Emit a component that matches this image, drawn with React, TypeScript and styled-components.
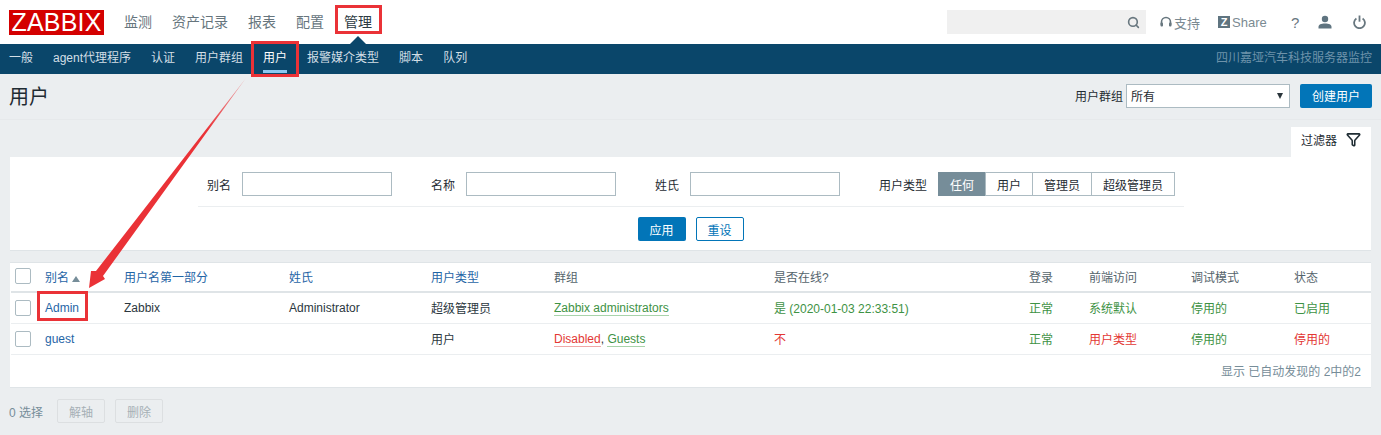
import styled, { createGlobalStyle } from "styled-components";
import { Filter, Search } from "lucide-react";

const GlobalStyle = createGlobalStyle`
  html, body {
    margin: 0;
    padding: 0;
    background: #ebeef0;
  }
  body {
    font-family: "Liberation Sans", "Noto Sans CJK SC", sans-serif;
    font-size: 12px;
    color: #1f2c33;
  }
`;

const Page = styled.div`
  position: relative;
  width: 1381px;
  height: 435px;
  overflow: hidden;
  background: #ebeef0;
`;

const TopBar = styled.header`
  display: flex;
  align-items: center;
  height: 44px;
  padding: 0 15px 0 9px;
  background: #fff;
`;

const Logo = styled.div`
  display: flex;
  align-items: center;
  justify-content: center;
  width: 95px;
  height: 25px;
  margin-right: 20px;
  background: #d40000;
  color: #fff;
  font-size: 25px;
  letter-spacing: 0.2px;
`;

const MainNav = styled.nav`
  display: flex;
  gap: 20px;
`;

const MainNavItem = styled.span<{ $active?: boolean }>`
  position: relative;
  font-size: 14px;
  line-height: 20px;
  color: ${(p) => (p.$active ? "#2c3a42" : "#66757d")};

  ${(p) =>
    p.$active &&
    `
    &::after {
      content: "";
      position: absolute;
      left: 6px;
      bottom: -12px;
      border-left: 8px solid transparent;
      border-right: 8px solid transparent;
      border-bottom: 8px solid #0a466a;
    }
  `}
`;

const ToolBar = styled.div`
  display: flex;
  align-items: center;
  margin-left: auto;
  color: #68777f;
`;

const SearchBox = styled.div`
  display: flex;
  align-items: center;
  justify-content: flex-end;
  width: 199px;
  height: 24px;
  padding-right: 6px;
  box-sizing: border-box;
  margin-right: 14px;
  background: #f0f0f0;
  color: #68777f;
`;

const ToolLink = styled.span<{ $width: number }>`
  display: flex;
  align-items: center;
  gap: 2px;
  width: ${(p) => p.$width}px;
  font-size: 13px;
  color: #7b8a92;
`;

const ZBadge = styled.span`
  display: inline-flex;
  align-items: center;
  justify-content: center;
  width: 12px;
  height: 12px;
  background: #5f7480;
  color: #fff;
  font-size: 11px;
  font-weight: 700;
`;

const HelpMark = styled.span`
  margin-left: 1px;
  font-size: 15px;
  color: #68777f;
`;

const SubBar = styled.nav`
  display: flex;
  align-items: stretch;
  gap: 20px;
  height: 30px;
  padding: 0 9px;
  background: #0a466a;
`;

const SubItem = styled.span<{ $active?: boolean }>`
  position: relative;
  line-height: 29px;
  color: ${(p) => (p.$active ? "#fff" : "#d3dfe6")};

  ${(p) =>
    p.$active &&
    `
    &::after {
      content: "";
      position: absolute;
      left: 0;
      right: 0;
      bottom: 1px;
      height: 3px;
      background: #8cc8f0;
    }
  `}
`;

const Motto = styled.span`
  margin-left: auto;
  line-height: 29px;
  color: #6e93aa;
`;

const TitleBar = styled.div`
  display: flex;
  align-items: center;
  height: 46px;
  padding: 0 9px 2px;
  box-sizing: border-box;
  border-bottom: 1px solid #e6e9eb;
`;

const Title = styled.h1`
  margin: 0 auto 0 0;
  font-size: 20px;
  font-weight: 400;
  color: #1f2c33;
`;

const GroupLabel = styled.label`
  margin-right: 3px;
  color: #1f2c33;
`;

const GroupSelect = styled.div`
  display: flex;
  align-items: center;
  justify-content: space-between;
  width: 164px;
  height: 24px;
  box-sizing: border-box;
  padding: 0 6px 0 4px;
  margin-right: 10px;
  background: #fff;
  border: 1px solid #acbbc2;
  color: #1f2c33;
`;

const SelectArrow = styled.span`
  border-left: 3px solid transparent;
  border-right: 3px solid transparent;
  border-top: 6px solid #2a353b;
`;

const PrimaryButton = styled.button<{ $width: number }>`
  width: ${(p) => p.$width}px;
  height: 24px;
  padding: 0;
  border: 0;
  border-radius: 2px;
  background: #0275b8;
  color: #fff;
  font: inherit;
`;

const OutlineButton = styled(PrimaryButton)`
  border: 1px solid #0275b8;
  background: #fff;
  color: #0275b8;
`;

const GhostButton = styled(PrimaryButton)`
  border: 1px solid #dcdfe1;
  background: #ebeef0;
  color: #a6b0b6;
`;

const FilterTabRow = styled.div`
  display: flex;
  justify-content: flex-end;
  padding: 7px 10px 0 0;
`;

const FilterTab = styled.div`
  display: flex;
  align-items: center;
  justify-content: space-between;
  width: 80px;
  height: 30px;
  box-sizing: border-box;
  padding: 0 10px 5px;
  background: #fff;
  color: #1f2c33;
`;

const FilterPanel = styled.section`
  margin: 0 10px;
  height: 94px;
  box-sizing: border-box;
  padding-top: 15px;
  background: #fff;
  border-bottom: 1px solid #dfe4e7;
`;

const FilterRow = styled.div`
  display: flex;
  align-items: center;
  height: 24px;
  margin: 0 187px 0 188px;
  padding: 0 0 10px 9px;
  border-bottom: 1px solid #ebeef0;
`;

const FilterField = styled.label`
  display: flex;
  flex: none;
  align-items: center;
  gap: 11px;
  margin-right: 39px;
  white-space: nowrap;
`;

const TextBox = styled.div`
  flex: none;
  width: 150px;
  height: 24px;
  box-sizing: border-box;
  background: #fff;
  border: 1px solid #acbbc2;
`;

const Segments = styled.div`
  display: flex;
  flex: none;
  height: 24px;
  padding-left: 1px;
`;

const Segment = styled.span<{ $width: number; $on?: boolean }>`
  display: flex;
  align-items: center;
  justify-content: center;
  width: ${(p) => p.$width}px;
  box-sizing: border-box;
  margin-left: -1px;
  border: 1px solid ${(p) => (p.$on ? "#768d99" : "#acbbc2")};
  background: ${(p) => (p.$on ? "#768d99" : "#fff")};
  color: ${(p) => (p.$on ? "#fff" : "#1f2c33")};
`;

const FilterActions = styled.div`
  display: flex;
  justify-content: center;
  gap: 10px;
  padding-top: 10px;
`;

const TablePanel = styled.section`
  margin: 11px 10px 0;
  height: 126px;
  box-sizing: border-box;
  padding-left: 1px;
  background: #fff;
  border-top: 1px solid #dfe4e7;
  border-bottom: 1px solid #dfe4e7;
`;

const Row = styled.div<{ $head?: boolean }>`
  display: grid;
  grid-template-columns: 34px 79px 165px 142px 123px 220px 255px 60px 102px 103px 1fr;
  align-items: center;
  height: ${(p) => (p.$head ? 26 : 29)}px;
  padding-bottom: ${(p) => (p.$head ? 2 : 1)}px;
  border-bottom: ${(p) => (p.$head ? "2px solid #dfe4e7" : "1px solid #ebeef0")};
`;

const Box = styled.span`
  display: block;
  width: 16px;
  height: 16px;
  box-sizing: border-box;
  margin-left: 4px;
  background: #fff;
  border: 1px solid #acbbc2;
  border-radius: 2px;
`;

const SortMark = styled.span`
  display: inline-block;
  margin-left: 3px;
  border-left: 4px solid transparent;
  border-right: 4px solid transparent;
  border-bottom: 6px solid #768d99;
`;

const toneColors = {
  link: "#1f65a6",
  green: "#3e9244",
  red: "#e33734",
  muted: "#55646c",
  plain: "#2b373e",
};

const Cell = styled.span<{ $tone?: keyof typeof toneColors }>`
  color: ${(p) => toneColors[p.$tone ?? "plain"]};
`;

const GroupLink = styled.span<{ $red?: boolean }>`
  color: ${(p) => (p.$red ? "#e33734" : "#3e9244")};
  border-bottom: 1px solid ${(p) => (p.$red ? "#f0a9a8" : "#a9d3ab")};
`;

const TableFooter = styled.div`
  padding: 7px 10px 0 0;
  text-align: right;
  color: #768d99;
`;

const BulkBar = styled.div`
  display: flex;
  align-items: center;
  gap: 10px;
  margin-top: 11px;
  padding-left: 9px;
  color: #768d99;
`;

const BulkCount = styled.span`
  width: 38px;
`;

const Callout = styled.div`
  position: absolute;
  box-sizing: border-box;
  border: 3px solid #ea3237;
`;

const ArrowLayer = styled.svg`
  position: absolute;
  left: 0;
  top: 0;
`;

const columns = ["用户名第一部分", "姓氏", "用户类型", "群组", "是否在线?", "登录", "前端访问", "调试模式", "状态"];

export default function App() {
  return (
    <Page>
      <GlobalStyle />
      <TopBar>
        <Logo>ZABBIX</Logo>
        <MainNav>
          <MainNavItem>监测</MainNavItem>
          <MainNavItem>资产记录</MainNavItem>
          <MainNavItem>报表</MainNavItem>
          <MainNavItem>配置</MainNavItem>
          <MainNavItem $active>管理</MainNavItem>
        </MainNav>
        <ToolBar>
          <SearchBox>
            <Search size={13} strokeWidth={3} />
          </SearchBox>
          <ToolLink $width={58}>
            <svg width="12" height="12" viewBox="0 0 12 12" fill="none">
              <path d="M1.5 9V6a4.5 4.5 0 0 1 9 0v3" stroke="#68777f" strokeWidth="1.6" />
              <rect x="0.5" y="6.5" width="2.5" height="4" rx="1" fill="#68777f" />
              <rect x="9" y="6.5" width="2.5" height="4" rx="1" fill="#68777f" />
            </svg>
            支持
          </ToolLink>
          <ToolLink $width={72}>
            <ZBadge>Z</ZBadge>
            Share
          </ToolLink>
          <ToolLink $width={28}>
            <HelpMark>?</HelpMark>
          </ToolLink>
          <ToolLink $width={35}>
            <svg width="14" height="14" viewBox="0 0 14 14">
              <circle cx="7" cy="4" r="3.2" fill="#5f7480" />
              <path d="M0.5 13.5v-1.6C0.5 9.8 3 8.6 7 8.6s6.500 1.200 6.500 3.300v1.600z" fill="#5f7480" />
            </svg>
          </ToolLink>
          <ToolLink $width={13}>
            <svg width="13" height="14" viewBox="0 0 13 14" fill="none" stroke="#68777f" strokeWidth="1.800">
              <path d="M3.400 3.400a5.400 5.400 0 1 0 6.200 0" />
              <path d="M6.500 0.500v6.200" />
            </svg>
          </ToolLink>
        </ToolBar>
      </TopBar>

      <SubBar>
        <SubItem>一般</SubItem>
        <SubItem>agent代理程序</SubItem>
        <SubItem>认证</SubItem>
        <SubItem>用户群组</SubItem>
        <SubItem $active>用户</SubItem>
        <SubItem>报警媒介类型</SubItem>
        <SubItem>脚本</SubItem>
        <SubItem>队列</SubItem>
        <Motto>四川嘉垭汽车科技服务器监控</Motto>
      </SubBar>

      <TitleBar>
        <Title>用户</Title>
        <GroupLabel>用户群组</GroupLabel>
        <GroupSelect>
          所有
          <SelectArrow />
        </GroupSelect>
        <PrimaryButton $width={72}>创建用户</PrimaryButton>
      </TitleBar>

      <FilterTabRow>
        <FilterTab>
          过滤器
          <Filter size={15} strokeWidth={2.5} color="#1f2c33" />
        </FilterTab>
      </FilterTabRow>

      <FilterPanel>
        <FilterRow>
          <FilterField>
            别名
            <TextBox />
          </FilterField>
          <FilterField>
            名称
            <TextBox />
          </FilterField>
          <FilterField>
            姓氏
            <TextBox />
          </FilterField>
          <FilterField>
            用户类型
            <Segments>
              <Segment $width={48} $on>任何</Segment>
              <Segment $width={48}>用户</Segment>
              <Segment $width={60}>管理员</Segment>
              <Segment $width={84}>超级管理员</Segment>
            </Segments>
          </FilterField>
        </FilterRow>
        <FilterActions>
          <PrimaryButton $width={48}>应用</PrimaryButton>
          <OutlineButton $width={48}>重设</OutlineButton>
        </FilterActions>
      </FilterPanel>

      <TablePanel>
        <Row $head>
          <Box />
          <Cell $tone="link">
            别名
            <SortMark />
          </Cell>
          {columns.map((title, i) => (
            <Cell key={title} $tone={i < 3 ? "link" : "muted"}>
              {title}
            </Cell>
          ))}
        </Row>
        <Row>
          <Box />
          <Cell $tone="link">Admin</Cell>
          <Cell>Zabbix</Cell>
          <Cell>Administrator</Cell>
          <Cell>超级管理员</Cell>
          <Cell>
            <GroupLink>Zabbix administrators</GroupLink>
          </Cell>
          <Cell $tone="green">是 (2020-01-03 22:33:51)</Cell>
          <Cell $tone="green">正常</Cell>
          <Cell $tone="green">系统默认</Cell>
          <Cell $tone="green">停用的</Cell>
          <Cell $tone="green">已启用</Cell>
        </Row>
        <Row>
          <Box />
          <Cell $tone="link">guest</Cell>
          <Cell />
          <Cell />
          <Cell>用户</Cell>
          <Cell>
            <GroupLink $red>Disabled</GroupLink>, <GroupLink>Guests</GroupLink>
          </Cell>
          <Cell $tone="red">不</Cell>
          <Cell $tone="green">正常</Cell>
          <Cell $tone="red">用户类型</Cell>
          <Cell $tone="green">停用的</Cell>
          <Cell $tone="red">停用的</Cell>
        </Row>
        <TableFooter>显示 已自动发现的 2中的2</TableFooter>
      </TablePanel>

      <BulkBar>
        <BulkCount>0 选择</BulkCount>
        <GhostButton $width={48}>解轴</GhostButton>
        <GhostButton $width={48}>删除</GhostButton>
      </BulkBar>

      <Callout style={{ left: 335, top: 5, width: 47, height: 29 }} />
      <Callout style={{ left: 251, top: 41, width: 48, height: 36 }} />
      <Callout style={{ left: 37, top: 291, width: 51, height: 30 }} />
      <ArrowLayer width={1381} height={435}>
        <defs>
          <linearGradient id="arrowFade" x1="246" y1="78" x2="89" y2="288" gradientUnits="userSpaceOnUse">
            <stop offset="0" stopColor="#ea3237" stopOpacity="0.35" />
            <stop offset="0.25" stopColor="#ea3237" />
          </linearGradient>
        </defs>
        <polygon points="246,78 103,276 105,279 89,288 91,271 96,271" fill="url(#arrowFade)" />
      </ArrowLayer>
    </Page>
  );
}
